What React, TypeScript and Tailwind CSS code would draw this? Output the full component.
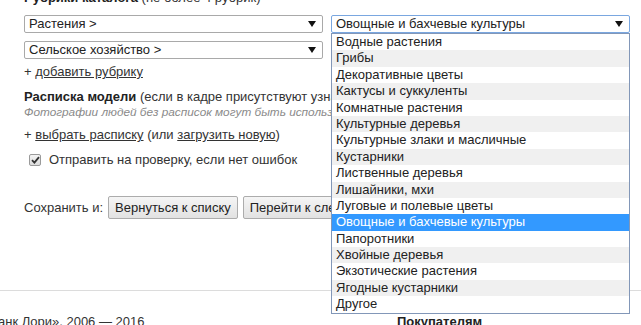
import React from "react";

const items = [
  "Водные растения",
  "Грибы",
  "Декоративные цветы",
  "Кактусы и суккуленты",
  "Комнатные растения",
  "Культурные деревья",
  "Культурные злаки и масличные",
  "Кустарники",
  "Лиственные деревья",
  "Лишайники, мхи",
  "Луговые и полевые цветы",
  "Овощные и бахчевые культуры",
  "Папоротники",
  "Хвойные деревья",
  "Экзотические растения",
  "Ягодные кустарники",
  "Другое",
];

function Arrow() {
  return (
    <svg width="8" height="6" viewBox="0 0 8 6" className="shrink-0">
      <polygon points="0,0 8,0 4,6" fill="#111" />
    </svg>
  );
}

function Select({ label, focused }: { label: string; focused?: boolean }) {
  return (
    <div
      className={
        "flex h-[18px] w-[299px] shrink-0 items-center justify-between rounded-[2px] border bg-white pl-[4px] pr-[6px] text-[13px] leading-[16px] text-[#222] " +
        (focused ? "border-[#7aa7e0]" : "border-[#a9a9a9]")
      }
    >
      <span>{label}</span>
      <Arrow />
    </div>
  );
}

function Button({ children }: { children: React.ReactNode }) {
  return (
    <div className="flex h-[23px] items-center whitespace-nowrap rounded-[2px] border border-[#acacac] bg-gradient-to-b from-[#f5f5f5] to-[#e2e2e2] px-[6px] text-[13px] text-[#222]">
      {children}
    </div>
  );
}

export default function App() {
  return (
    <div
      className="relative h-[325px] w-[641px] overflow-hidden bg-white text-[13px] text-[#333]"
      style={{ fontFamily: '"Liberation Sans", Arial, sans-serif' }}
    >
      <div className="pl-[24px]">
        <div className="mt-[-10px] h-[16px] whitespace-nowrap leading-[16px]">
          <b className="text-[#222]">Рубрики каталога</b> (не более 4 рубрик)
        </div>
        <div className="mt-[9px] flex gap-[8px]">
          <Select label="Растения >" />
          <Select label="Овощные и бахчевые культуры" focused />
        </div>
        <div className="mt-[8px] flex">
          <Select label="Сельское хозяйство >" />
        </div>
        <div className="mt-[5px] h-[16px] leading-[16px]">
          + <span className="underline">добавить рубрику</span>
        </div>
        <div className="mt-[9px] h-[16px] whitespace-nowrap leading-[16px]">
          <b className="text-[#222]">Расписка модели</b> (если в кадре присутствуют узнаваемые люди)
        </div>
        <div className="h-[14px] whitespace-nowrap text-[11.8px] italic leading-[14px] text-[#8a8a8a]">
          Фотографии людей без расписок могут быть использованы только в редакционных целях
        </div>
        <div className="mt-[8px] h-[16px] whitespace-nowrap leading-[16px]">
          + <span className="underline">выбрать расписку</span> (или{" "}
          <span className="underline">загрузить новую</span>)
        </div>
        <div className="mt-[9px] flex h-[16px] items-center whitespace-nowrap pl-[5px] leading-[16px]">
          <span className="flex h-[12px] w-[12px] items-center justify-center rounded-[2px] border border-[#9a9a9a] bg-gradient-to-b from-[#f4f4f4] to-[#dcdcdc]">
            <svg width="9" height="8" viewBox="0 0 9 8">
              <path d="M1 4.2 L3.4 6.6 L8 1.2" stroke="#333" strokeWidth="1.8" fill="none" />
            </svg>
          </span>
          <span className="ml-[8px]">Отправить на проверку, если нет ошибок</span>
        </div>
        <div className="mt-[28px] flex items-center gap-[5px] whitespace-nowrap">
          <span className="mr-[0px]">Сохранить и:</span>
          <Button>Вернуться к списку</Button>
          <Button>Перейти к следующей</Button>
        </div>
      </div>
      <div className="mt-[71px] h-px w-full bg-[#dcdcdc]" />
      <div className="mt-[23px] flex h-[16px] whitespace-nowrap leading-[16px]">
        <span className="ml-[-2px] w-[399px]">анк Лори», 2006 — 2016</span>
        <b className="text-[#222]">Покупателям</b>
      </div>

      <div className="absolute left-[331px] top-[33px] w-[299px] border border-[#8297b8] bg-white">
        {items.map((it, i) => (
          <div
            key={it}
            className={
              "h-[16.4px] whitespace-nowrap pl-[4px] text-[13px] leading-[16px] " +
              (i === 11
                ? "bg-[#3399ff] text-white"
                : i % 2 === 1
                ? "bg-[#f0f0f0] text-[#222]"
                : "bg-white text-[#222]")
            }
          >
            {it}
          </div>
        ))}
      </div>
    </div>
  );
}
